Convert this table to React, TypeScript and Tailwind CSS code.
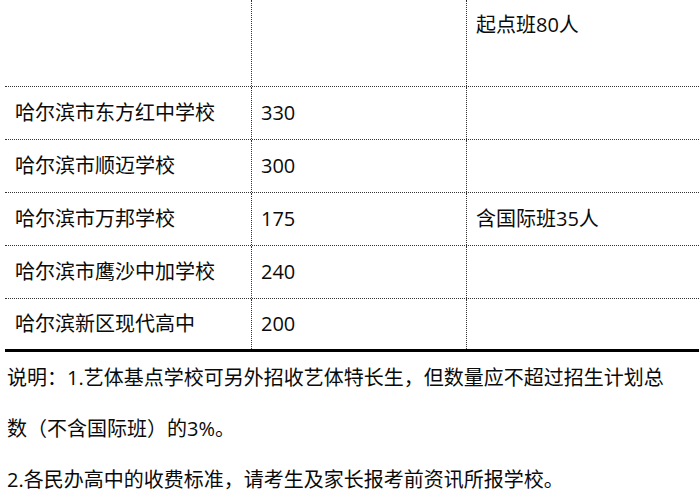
const rows = [
  { name: '', count: '', note: '起点班80人', top: true },
  { name: '哈尔滨市东方红中学校', count: '330', note: '' },
  { name: '哈尔滨市顺迈学校', count: '300', note: '' },
  { name: '哈尔滨市万邦学校', count: '175', note: '含国际班35人' },
  { name: '哈尔滨市鹰沙中加学校', count: '240', note: '' },
  { name: '哈尔滨新区现代高中', count: '200', note: '' },
];

export default function App() {
  return (
    <div
      className="w-[699px] h-[500px] overflow-hidden bg-white text-[20px] text-[#0a0a0a]"
      style={{ fontFamily: '"Open Sans", "Noto Sans CJK SC", sans-serif' }}
    >
      {/* Table */}
      <div className="pl-[5px]">
        {rows.map((row, i) => {
          const last = i === rows.length - 1;
          return (
            <div
              key={i}
              className={`grid grid-cols-[246px_215px_1fr] ${
                last ? 'border-b-[3px] border-solid border-black' : 'border-b border-dotted border-[#333]'
              } ${row.top ? 'h-[87px]' : 'h-[53px]'}`}
            >
              <div className="pl-[10px] flex items-center">{row.name}</div>
              <div className="pl-[9px] flex items-center border-l border-dotted border-[#333]">{row.count}</div>
              <div
                className={`pl-[9px] flex border-l border-dotted border-[#333] ${
                  row.top ? 'items-start pt-[10px] leading-[30px]' : 'items-center'
                }`}
              >
                {row.note}
              </div>
            </div>
          );
        })}
      </div>

      {/* Notes */}
      <div className="pl-[7px] leading-[51px]">
        <p>
          说明：1.艺体基点学校可另外招收艺体特长生，但数量应不超过招生计划总
          <br />
          数（不含国际班）的3%。
        </p>
        <p>2.各民办高中的收费标准，请考生及家长报考前资讯所报学校。</p>
      </div>
    </div>
  );
}
